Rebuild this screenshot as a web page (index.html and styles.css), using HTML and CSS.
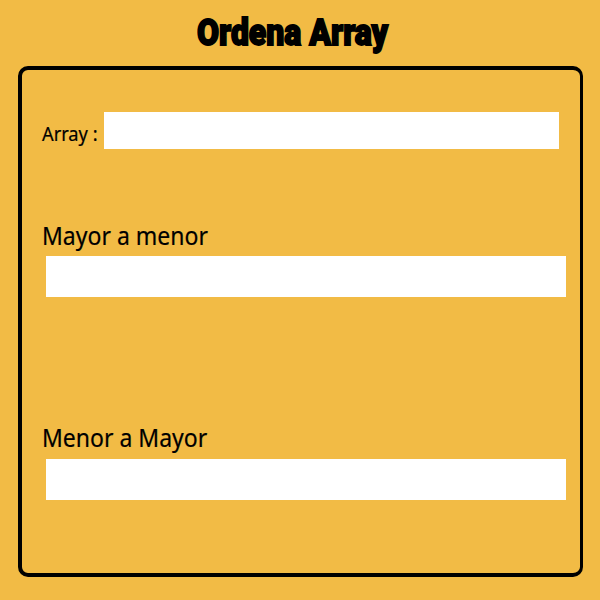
FILE: index.html
```html
<!DOCTYPE html>
<html lang="es">
<head>
<meta charset="utf-8">
<title>Ordena Array</title>
<link rel="stylesheet" href="styles.css">
</head>
<body>
<h1 class="title"><span class="title-text">Ordena Array</span></h1>
<main class="panel">
  <div class="entry">
    <label class="entry-label" for="array"><span class="entry-text">Array :</span></label>
    <input class="entry-field" id="array" type="text">
  </div>
  <section class="result">
    <label class="result-label" for="desc"><span class="result-text">Mayor a menor</span></label>
    <input class="result-field" id="desc" type="text">
  </section>
  <section class="result result-last">
    <label class="result-label" for="asc"><span class="result-text">Menor a Mayor</span></label>
    <input class="result-field" id="asc" type="text">
  </section>
</main>
</body>
</html>
```

FILE: styles.css
```css
* { box-sizing: border-box; }
body {
  margin: 0;
  height: 600px;
  background: #f2bb45;
  color: #000;
  font-family: "Noto Sans", "Open Sans", sans-serif;
  overflow: hidden;
}
.title {
  margin: 0;
  height: 66px;
  padding-left: 197px;
  font: 900 37px/66px Impact, "Roboto", sans-serif;
  white-space: nowrap;
}
.title-text {
  display: inline-block;
  transform-origin: 0 50%;
  transform: scaleX(.864);
  -webkit-text-stroke: 1.8px #000;
}
.panel {
  margin-left: 18px;
  width: 565px;
  height: 511px;
  border: 4px solid #000;
  border-right-width: 3px;
  border-radius: 10px;
  padding: 42px 0 0 20px;
}
.entry { display: flex; height: 37px; }
.entry-label {
  width: 62px;
  font-size: 19px;
  line-height: 45px;
  white-space: nowrap;
}
.entry-text, .result-text {
  display: inline-block;
  transform-origin: 0 50%;
  -webkit-text-stroke: .2px #000;
}
.entry-text { transform: scaleX(.96); }
.result-text { transform: scaleX(.92); }
input { display: block; border: 0; padding: 0 8px; background: #fff; font: 18px "Noto Sans", sans-serif; }
.entry-field { width: 455px; height: 37px; }
.result { margin-top: 70px; }
.result-label { display: block; height: 37px; font-size: 25px; line-height: 32px; }
.result-field { width: 520px; height: 41px; margin-left: 4px; }
.result-last { margin-top: 124px; }
.result-last .result-label { height: 38px; }
```
